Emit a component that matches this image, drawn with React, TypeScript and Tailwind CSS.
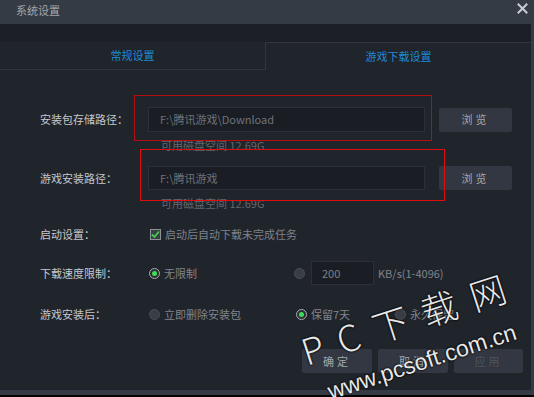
import React from "react";

const font = { fontFamily: "'Noto Sans CJK SC', 'Noto Sans', sans-serif" };

function Radio({ checked }: { checked?: boolean }) {
  return checked ? (
    <span className="w-[11px] h-[11px] rounded-full border border-[#a9adb2] bg-[#2b2f36] flex items-center justify-center shrink-0">
      <span className="w-[5px] h-[5px] rounded-full bg-[#3fdc55]" />
    </span>
  ) : (
    <span className="w-[11px] h-[11px] rounded-full border border-[#4a4f57] bg-[#393d45] shrink-0" />
  );
}

function Btn({ children, disabled, w }: { children: React.ReactNode; disabled?: boolean; w: string }) {
  return (
    <div
      className={`${w} h-[24px] rounded-[2px] bg-[#323741] flex items-center justify-center text-[11px] tracking-[3px] ${
        disabled ? "text-[#4f545c]" : "text-[#a4a8ae]"
      }`}
    >
      {children}
    </div>
  );
}

export default function App() {
  return (
    <div className="w-[534px] h-[397px] bg-black overflow-hidden relative" style={font}>
      <div className="h-[395px] bg-[#353b45] flex flex-col pr-[3px] pb-[5px]">
        {/* title bar */}
        <div className="h-[24px] shrink-0 flex items-center justify-between pl-[16px] pr-[3px]">
          <span className="text-[11px] text-[#a2a6ab] leading-none -mt-[4px]">系统设置</span>
          <svg width="11" height="11" viewBox="0 0 11 11" className="-mt-[8px]">
            <path d="M1.5 1.5 L9.5 9.5 M9.5 1.5 L1.5 9.5" stroke="#c9ccd1" strokeWidth="2" strokeLinecap="square" />
          </svg>
        </div>
        {/* body */}
        <div className="flex-1 bg-[#20242b] flex flex-col">
          <div className="h-[18px] bg-[#1c1f26] shrink-0" />
          <div className="h-[28px] flex shrink-0">
            <div className="w-[265px] border-b border-[#30353e] flex items-center justify-center text-[11px] text-[#1f8ad6]">
              常规设置
            </div>
            <div className="flex-1 border-t border-l border-[#30353e] flex items-center justify-center text-[11px] text-[#1f8ad6]">
              游戏下载设置
            </div>
          </div>

          <div className="pl-[40px] flex flex-col text-[11px]">
            {/* row 1 */}
            <div className="mt-[37px] h-[25px] flex items-center">
              <span className="w-[108px] text-[#c6c9cd]">安装包存储路径：</span>
              <div className="w-[277px] h-[25px] bg-[#1a1d23] border border-[#2b2f37] flex items-center pl-[11px] text-[#6e737a]">
                F:\腾讯游戏\Download
              </div>
              <div className="ml-[14px]">
                <Btn w="w-[73px]">浏览</Btn>
              </div>
            </div>
            <div className="mt-[6px] h-[14px] leading-[14px] pl-[121px] text-[#62676e]">可用磁盘空间 12.69G</div>

            {/* row 2 */}
            <div className="mt-[14px] h-[24px] flex items-center">
              <span className="w-[108px] text-[#c6c9cd]">游戏安装路径：</span>
              <div className="w-[277px] h-[24px] bg-[#1a1d23] border border-[#2b2f37] flex items-center pl-[11px] text-[#6e737a]">
                F:\腾讯游戏
              </div>
              <div className="ml-[14px]">
                <Btn w="w-[73px]">浏览</Btn>
              </div>
            </div>
            <div className="mt-[6px] h-[14px] leading-[14px] pl-[121px] text-[#62676e]">可用磁盘空间 12.69G</div>

            {/* row 3 */}
            <div className="mt-[17px] h-[14px] flex items-center">
              <span className="w-[110px] text-[#c6c9cd]">启动设置：</span>
              <span className="w-[11px] h-[11px] border border-[#8d9197] bg-[#3a3e45] flex items-center justify-center shrink-0">
                <svg width="9" height="9" viewBox="0 0 9 9">
                  <path d="M1 4.5 L3.5 7 L8 1.5" stroke="#3fd04c" strokeWidth="1.8" fill="none" />
                </svg>
              </span>
              <span className="ml-[4px] text-[#7d8289]">启动后自动下载未完成任务</span>
            </div>

            {/* row 4 */}
            <div className="mt-[20px] h-[24px] flex items-center">
              <span className="w-[109px] text-[#c6c9cd]">下载速度限制：</span>
              <Radio checked />
              <span className="ml-[4px] w-[130px] text-[#80858c]">无限制</span>
              <Radio />
              <div className="ml-[6px] w-[63px] h-[24px] bg-[#1a1d23] border border-[#2b2f37] flex items-center pl-[10px] text-[#7d8289]">
                200
              </div>
              <span className="ml-[4px] text-[#80858c]">KB/s(1-4096)</span>
            </div>

            {/* row 5 */}
            <div className="mt-[22px] h-[14px] flex items-center">
              <span className="w-[109px] text-[#c6c9cd]">游戏安装后：</span>
              <Radio />
              <span className="ml-[4px] w-[132px] text-[#80858c]">立即删除安装包</span>
              <Radio checked />
              <span className="ml-[4px] w-[84px] text-[#80858c]">保留7天</span>
              <Radio />
              <span className="ml-[4px] text-[#80858c]">永久保留</span>
            </div>
          </div>

          {/* buttons */}
          <div className="mt-[28px] flex justify-end pr-[8px] gap-[6px]">
            <Btn w="w-[70px]">确定</Btn>
            <Btn w="w-[70px]">取消</Btn>
            <Btn w="w-[69px]" disabled>
              应用
            </Btn>
          </div>
        </div>
      </div>

      {/* red annotation boxes */}
      <div className="absolute left-[134px] top-[95px] w-[298px] h-[46px] border-[1.5px] border-[#b40e0e]" />
      <div className="absolute left-[140px] top-[149px] w-[305px] h-[52px] border-[1.5px] border-[#e00d0d]" />

      {/* watermark */}
      <div
        className="absolute left-[403px] top-[318px] -translate-x-1/2 -translate-y-1/2 -rotate-[18deg] whitespace-nowrap text-[36px] leading-none tracking-[15px] pl-[15px] text-[#e8e8e8]"
        style={{ textShadow: "0 0 2px #000, 0 0 2px #000", fontFamily: "'Noto Sans CJK SC', sans-serif", fontWeight: 300 }}
      >
        PC下载网
      </div>
      <div
        className="absolute left-[422px] top-[362px] -translate-x-1/2 -translate-y-1/2 -rotate-[18deg] whitespace-nowrap text-[23px] leading-none text-[#e8e8e8]"
        style={{ textShadow: "0 0 2px #000, 0 0 2px #000", fontFamily: "'Liberation Sans', sans-serif" }}
      >
        www.pcsoft.com.cn
      </div>
    </div>
  );
}
